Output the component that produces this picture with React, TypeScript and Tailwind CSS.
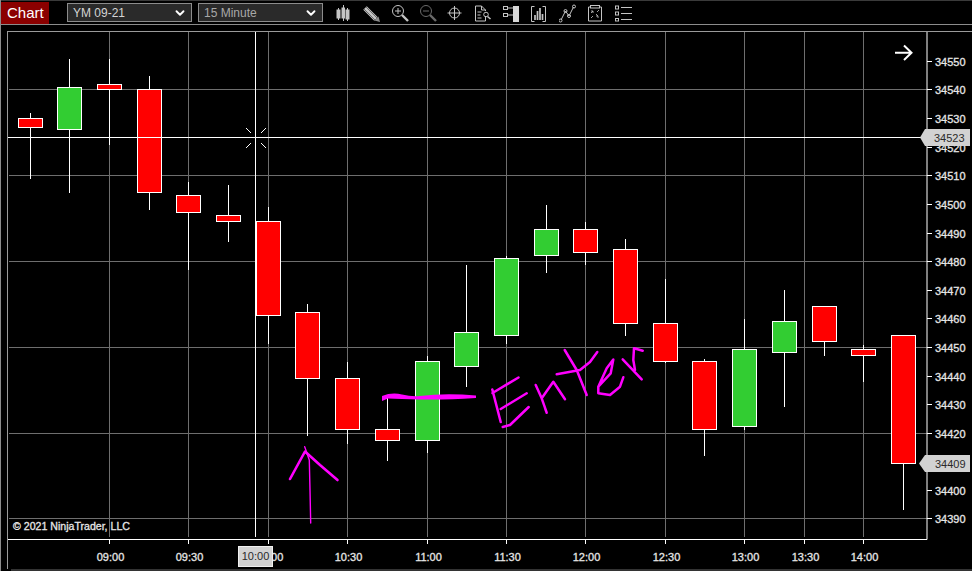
import { FC, ReactNode } from "react";
import { ChevronDown } from "lucide-react";

type candle = { x: number; hi: number; lo: number; top: number; bot: number; up: boolean };

const candles: candle[] = [
  { x: 30.5, hi: 113, lo: 179, top: 118.5, bot: 127.5, up: false },
  { x: 69.5, hi: 59, lo: 193, top: 87.5, bot: 129.5, up: true },
  { x: 109.5, hi: 59, lo: 145, top: 84.5, bot: 89.5, up: false },
  { x: 149.5, hi: 76, lo: 210, top: 89.5, bot: 192.5, up: false },
  { x: 188.5, hi: 182, lo: 270, top: 195.5, bot: 212.5, up: false },
  { x: 228.5, hi: 185, lo: 242, top: 215.5, bot: 221.5, up: false },
  { x: 268.5, hi: 207, lo: 344, top: 221.5, bot: 315.5, up: false },
  { x: 307.5, hi: 304, lo: 436, top: 312.5, bot: 378.5, up: false },
  { x: 347.5, hi: 362, lo: 444, top: 378.5, bot: 429.5, up: false },
  { x: 387.5, hi: 397, lo: 461, top: 429.5, bot: 440.5, up: false },
  { x: 427.5, hi: 356, lo: 453, top: 361.5, bot: 440.5, up: true },
  { x: 466.5, hi: 265, lo: 387, top: 332.5, bot: 366.5, up: true },
  { x: 506.5, hi: 256, lo: 344, top: 258.5, bot: 335.5, up: true },
  { x: 546.5, hi: 205, lo: 273, top: 229.5, bot: 255.5, up: true },
  { x: 585.5, hi: 222, lo: 265, top: 229.5, bot: 252.5, up: false },
  { x: 625.5, hi: 239, lo: 336, top: 249.5, bot: 323.5, up: false },
  { x: 665.5, hi: 279, lo: 363, top: 323.5, bot: 361.5, up: false },
  { x: 704.5, hi: 359, lo: 456, top: 361.5, bot: 429.5, up: false },
  { x: 744.5, hi: 319, lo: 430, top: 349.5, bot: 426.5, up: true },
  { x: 784.5, hi: 290, lo: 407, top: 321.5, bot: 352.5, up: true },
  { x: 824.5, hi: 306, lo: 356, top: 306.5, bot: 341.5, up: false },
  { x: 863.5, hi: 345, lo: 382, top: 349.5, bot: 355.5, up: false },
  { x: 903.5, hi: 335, lo: 510, top: 335.5, bot: 463.5, up: false },
];

const precios = [
  { y: 61.5, t: "34550" },
  { y: 89.5, t: "34540" },
  { y: 118.5, t: "34530" },
  { y: 147.5, t: "34520" },
  { y: 175.5, t: "34510" },
  { y: 204.5, t: "34500" },
  { y: 233.5, t: "34490" },
  { y: 261.5, t: "34480" },
  { y: 290.5, t: "34470" },
  { y: 318.5, t: "34460" },
  { y: 347.5, t: "34450" },
  { y: 376.5, t: "34440" },
  { y: 404.5, t: "34430" },
  { y: 433.5, t: "34420" },
  { y: 490.5, t: "34400" },
  { y: 518.5, t: "34390" },
];

const gridY = [89.5, 175.5, 261.5, 347.5, 433.5, 518.5];

const horas = [
  { x: 109.5, t: "09:00" },
  { x: 188.5, t: "09:30" },
  { x: 268.5, t: "10:00" },
  { x: 347.5, t: "10:30" },
  { x: 427.5, t: "11:00" },
  { x: 506.5, t: "11:30" },
  { x: 585.5, t: "12:00" },
  { x: 665.5, t: "12:30" },
  { x: 744.5, t: "13:00" },
  { x: 804.5, t: "13:30" },
  { x: 863.5, t: "14:00" },
];

const Select: FC<{ label: string; className: string }> = ({ label, className }) => (
  <div className={`w-[125px] h-[19px] flex items-center justify-between pl-[5px] pr-[4px] bg-[#2a2a2a] border border-[#8c8c8c] text-[12px] ${className}`}>
    <span>{label}</span>
    <ChevronDown size={14} strokeWidth={3.2} color="#ffffff" />
  </div>
);

const ToolIcon: FC<{ children: ReactNode; dx?: number }> = ({ children, dx = 0 }) => (
  <svg width="20" height="20" viewBox={`${dx} 0 20 20`} fill="none" stroke="#c4c4c4" strokeWidth="1">
    {children}
  </svg>
);

const Toolbar: FC = () => (
  <div className="h-[25px] shrink-0 flex items-center border-b border-[#8c8c8c] border-t border-t-[#3a3a3a]">
    <div className="w-[48px] h-[22px] bg-[#8b0000] text-white text-[15px] leading-[22px] pl-[6px]">Chart</div>
    <div className="flex gap-[6px] ml-[18px]">
      <Select label="YM 09-21" className="text-[#d4d4d4]" />
      <Select label="15 Minute" className="text-[#a8a8a8]" />
    </div>
    <div className="flex gap-[8px] ml-[12px]">
      <ToolIcon>
        <path d="M3.5 5V17M8.5 2V18M12.5 5V18" />
        <rect x="2" y="7" width="3" height="8" fill="#c4c4c4" />
        <rect x="7" y="5" width="2.5" height="10" fill="#c4c4c4" />
        <rect x="11" y="7" width="3" height="9" fill="#c4c4c4" />
      </ToolIcon>
      <ToolIcon>
        <path d="M2 5L13 16" stroke="#c4c4c4" strokeWidth="5" />
        <path d="M1 6L12 17M3 4L14 15" stroke="#555" strokeWidth="0.8" />
        <path d="M11.5 17.5L15.5 13.5L17 19Z" fill="#8c8c8c" stroke="none" />
      </ToolIcon>
      <ToolIcon>
        <circle cx="7" cy="8" r="5.5" />
        <path d="M4 8H10M7 5V11" />
        <path d="M11 12L17 18" strokeWidth="2.4" />
      </ToolIcon>
      <ToolIcon>
        <g stroke="#6a6a6a">
          <circle cx="7" cy="8" r="5.5" />
          <path d="M4 8H10" />
          <path d="M11 12L17 18" strokeWidth="2.4" />
        </g>
      </ToolIcon>
      <ToolIcon dx={1.5}>
        <circle cx="9" cy="10" r="5" />
        <path d="M9 3V17M2 10H16" />
      </ToolIcon>
      <ToolIcon dx={1.5}>
        <path d="M12 13V18H2V3H8L12 7V8M8 3V7H12" />
        <path d="M4 9H8M4 12H7M4 15H8" />
        <circle cx="12.5" cy="11.5" r="2.3" />
        <path d="M14 13.5L17 16" strokeWidth="1.6" />
      </ToolIcon>
      <ToolIcon dx={1}>
        <rect x="1.5" y="3.5" width="4" height="3" />
        <rect x="1.5" y="10.5" width="4" height="3" />
        <path d="M5.5 5H11M5.5 12H11" />
        <rect x="11" y="3" width="6" height="16" fill="#d8d8d8" stroke="none" />
      </ToolIcon>
      <ToolIcon dx={1.5}>
        <path d="M5 3.5H2V18.5H5M13 3.5H16V18.5H13" />
        <path d="M5.5 17V12M8 17V8M10.5 17V5M13 17V11" strokeWidth="1.7" />
      </ToolIcon>
      <ToolIcon dx={1}>
        <path d="M3 17L7.5 8L11 13L15.5 4" />
        <circle cx="2.5" cy="17.5" r="1.5" />
        <circle cx="7.5" cy="8" r="1.5" />
        <circle cx="11" cy="13" r="1.5" />
        <circle cx="16" cy="3.5" r="1.5" />
      </ToolIcon>
      <ToolIcon dx={1}>
        <path d="M4 4H2.5V18H15.5V4H14" />
        <rect x="4.5" y="2.5" width="9" height="2.5" />
        <path d="M5 10L7 8M5 8H7V10M10 11L12 13M10 13H12V15" strokeWidth="0.8" />
        <path d="M5 15L7 13M11 9L13 7" strokeWidth="0.8" />
      </ToolIcon>
      <ToolIcon dx={1}>
        <rect x="1.5" y="3" width="3" height="3" />
        <rect x="1.5" y="9" width="3" height="3" />
        <rect x="1.5" y="15.5" width="3" height="2.5" />
        <path d="M7 4.5H18M7 10.5H18M7 16.5H18" />
      </ToolIcon>
    </div>
  </div>
);

const Velas: FC = () => (
  <>
    {candles.map((c) => (
      <g key={c.x}>
        <path d={`M${c.x} ${c.hi}V${c.lo}`} stroke="#ffffff" />
        <rect x={c.x - 12} y={c.top} width="24" height={c.bot - c.top} fill={c.up ? "#32cd32" : "#ff0000"} stroke="#ffffff" />
      </g>
    ))}
  </>
);

const Rayas: FC = () => (
  <g stroke="#ff00ff" fill="none" strokeLinecap="round" strokeLinejoin="round">
    <path d="M304.7 446.7L309.3 460L310 490L310.7 523" strokeWidth="1.4" />
    <path d="M290 479L305 451.5L320 465L337.5 480" strokeWidth="2.6" />
    <path
      d="M382 396Q392 392 402 394.5T420 396Q445 393 476 395.5L476 398Q445 400 420 399.5Q400 399 388 398.5L382 401Z"
      fill="#ff00ff"
      stroke="none"
    />
    <g strokeWidth="2.5">
      <path d="M492.5 393L518.5 377.5M492.3 389.5L500.7 422M500.7 409L526.7 393.3M502.7 427L510 425L528.7 407" />
      <path d="M535.7 385L541.7 398.3L546.7 412.7L545 408M541.7 398.3L553.3 381.7L565 399.3" />
      <path d="M564.7 350L576.7 370L586.7 395M556.7 374.3L580 370L590 362L597.3 352" />
      <path d="M598.3 386.7L606.7 368.3L613.3 359.5L610.7 373.3L598.3 386.7L598.3 393.3L610 395L620 386.7L623.3 377.3" />
      <path d="M622.7 359.3L641.7 379.3M642.7 350.7L634 348.3L633.3 360L635 370" />
    </g>
  </g>
);

const Chart: FC = () => (
  <svg width="964" height="537" viewBox="8 32 964 537" className="block font-['Liberation_Sans',sans-serif]">
    {/* grilla */}
    <g stroke="#6e6e6e" fill="none">
      {gridY.map((y) => (
        <path key={y} d={`M9 ${y}H927`} />
      ))}
      {horas.map((h) => (
        <path key={h.x} d={`M${h.x} 32V537`} />
      ))}
    </g>
    <Velas />
    {/* crosshair */}
    <g stroke="#ffffff" fill="none">
      <path d="M255.5 32V537M8 137.5H927" />
      <path d="M246 128L251 133M266 128L261 133M246 148L251 143M266 148L261 143" />
      <path d="M927 32V539.5H8" />
      {precios.map((p) => (
        <path key={p.t} d={`M927 ${p.y}H932`} />
      ))}
      {horas.map((h) => (
        <path key={h.t} d={`M${h.x} 540V544`} />
      ))}
      <path d="M895 52.8H911M904 45.5L911.5 52.8L904 60" strokeWidth="2" />
    </g>
    <g fill="#e6e6e6" fontSize="11" stroke="#e6e6e6" strokeWidth="0.3">
      {precios.map((p) => (
        <text key={p.t} x="935" y={p.y + 4}>
          {p.t}
        </text>
      ))}
      {horas.map((h) => (
        <text key={h.t} x={h.x + 1} y="561" textAnchor="middle">
          {h.t}
        </text>
      ))}
      <text x="13" y="530" fontSize="10.6">
        © 2021 NinjaTrader, LLC
      </text>
    </g>
    {/* etiquetas de precio y tiempo */}
    <g fill="#d2d2d2" stroke="none">
      <path d="M920 137.5L925 129H970V146H925Z" />
      <path d="M919 463.5L925 455H970V472H925Z" />
    </g>
    <rect x="238.5" y="546.5" width="34" height="20" fill="#d2d2d2" stroke="#f0f0f0" />
    <g fill="#2a2a2a" fontSize="11">
      <text x="934" y="142">34523</text>
      <text x="935" y="468">34409</text>
      <text x="255.5" y="560" textAnchor="middle">10:00</text>
    </g>
    <Rayas />
  </svg>
);

const App: FC = () => (
  <div className="w-[972px] h-[571px] overflow-hidden bg-black border-l border-[#8c8c8c] flex flex-col font-['Liberation_Sans',sans-serif]">
    <Toolbar />
    <div className="ml-[6px] mt-[6px] border-l border-t border-[#9a9a9a]">
      <Chart />
    </div>
    <div className="h-[2px] bg-[#333333] ml-[10px]" />
  </div>
);

export default App;
